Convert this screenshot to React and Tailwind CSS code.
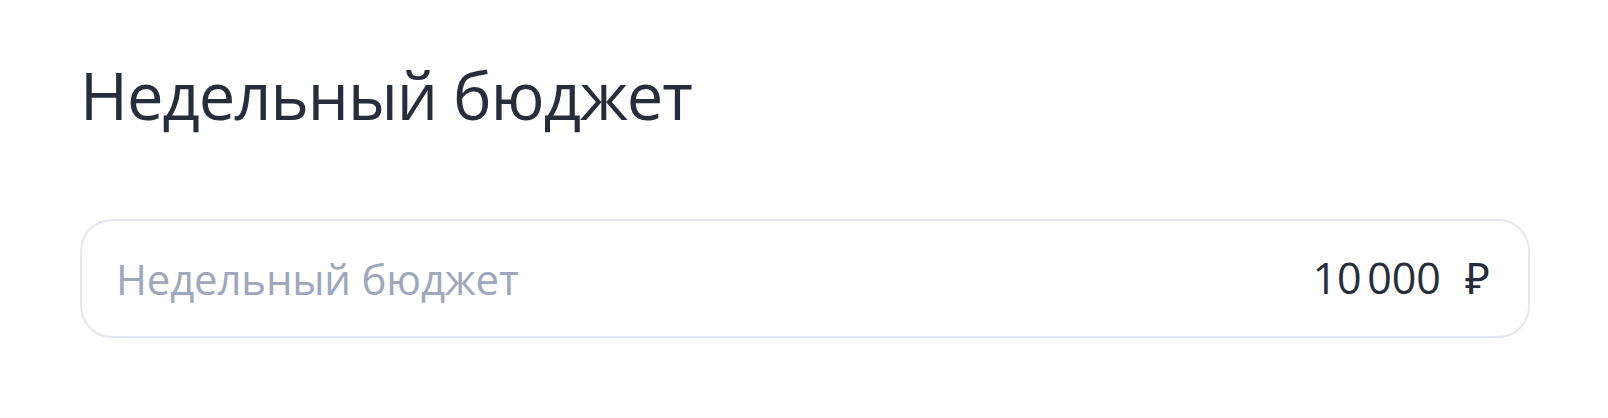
export default function App() {
  return (
    <div className="w-[1608px] h-[418px] bg-white px-[80px] pt-[55px]" style={{ fontFamily: "'Open Sans', 'Noto Sans', sans-serif" }}>
      <h1 className="text-[65px] leading-[80px] text-[#272d3b] font-normal tracking-[-1px]">Недельный бюджет</h1>
      <div className="mt-[84px] w-[1450px] h-[119px] rounded-[32px] border-2 border-[#e6e8f0] flex items-center justify-between pl-[34px] pr-[38px]">
        <span className="text-[42px] text-[#9ea7bc] tracking-[-0.2px]">Недельный бюджет</span>
        <span className="flex items-center text-[#272d3b]">
          <span className="text-[43px] tracking-[-0.5px]">10&#8239;000</span>
          <span className="text-[43px] ml-[24px]">₽</span>
        </span>
      </div>
    </div>
  );
}
